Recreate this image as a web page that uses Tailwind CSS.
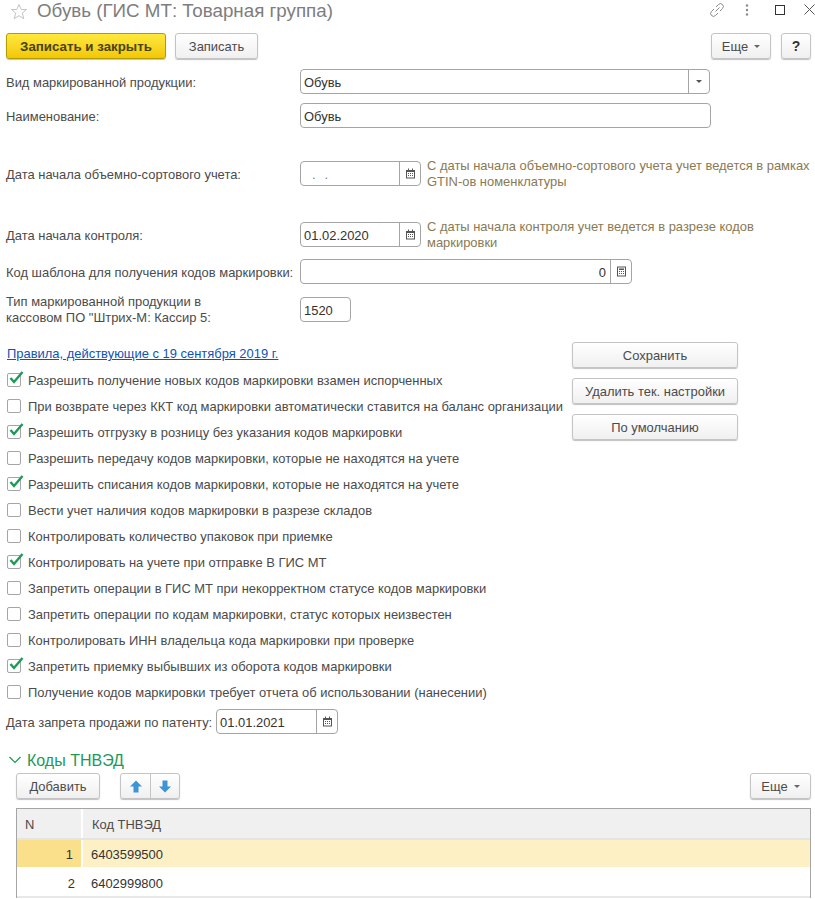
<!doctype html>
<html lang="ru">
<head>
  <meta charset="utf-8"/>
  <title>Обувь (ГИС МТ: Товарная группа)</title>
  <script src="https://cdn.jsdelivr.net/npm/@tailwindcss/browser@4"></script>
</head>
<body class="bg-white text-[#4b4b4b] font-['Liberation_Sans',Arial,sans-serif] text-[12.95px] leading-[15px]">
<div class="w-[815px] h-[899px] overflow-hidden">

  <!-- Заголовок -->
  <header class="h-[33px] flex items-start">
    <svg class="ml-[10px] mt-[3px] w-[18px] h-[18px]" viewBox="0 0 18 18" fill="none" stroke="#c4c4c4" stroke-width="1"><path d="M9 1.500l2.200 5h5.300l-4.200 3.600 1.500 5.600L9 12.700l-4.800 3 1.500-5.600L1.500 6.500h5.300z"/></svg>
    <h1 class="ml-[9px] mt-[-1px] text-[18.75px] leading-[24px] text-[#7d7d7d]">Обувь (ГИС МТ: Товарная группа)</h1>
    <div class="ml-auto flex items-start">
      <svg class="mt-[1px] w-[18px] h-[18px]" viewBox="0 0 18 18" fill="none" stroke="#8a8a8a" stroke-width="1"><path d="M7.500 10.500l4-4M6 8l-2.500 2.500a2.800 2.800 0 0 0 4 4L10 12M8 6l2.500-2.500a2.800 2.800 0 0 1 4 4L12 10"/></svg>
      <svg class="ml-[19px] mt-[3px] w-[4px] h-[14px]" viewBox="0 0 4 14" fill="#8a8a8a"><circle cx="2" cy="2.500" r="1.200"/><circle cx="2" cy="7" r="1.200"/><circle cx="2" cy="11.500" r="1.200"/></svg>
      <div class="ml-[26px] mt-[5px] w-[10px] h-[10px] border border-[#333]"></div>
      <svg class="ml-[19px] mt-[4px] w-[11px] h-[11px]" viewBox="0 0 11 11" stroke="#555" stroke-width="1"><path d="M0.500 0.500l10 10M10.500 0.500l-10 10"/></svg>
    </div>
  </header>

  <!-- Командная панель -->
  <div class="h-[26px] flex pl-[6px] pr-[4px]">
    <button class="w-[160px] h-[26px] rounded-[3px] border border-[#b39b00] bg-gradient-to-b from-[#ffe93a] to-[#f2c700] font-bold text-[13.3px] text-[#4a4312] shadow-[0_1px_1px_rgba(0,0,0,0.25)]">Записать и закрыть</button>
    <button class="ml-[9px] w-[83px] h-[26px] rounded-[3px] border border-[#c4c4c4] bg-gradient-to-b from-white to-[#f0f0f0] text-[#4b4b4b] shadow-[0_1px_1px_rgba(0,0,0,0.25)]">Записать</button>
    <button class="ml-auto w-[60px] h-[26px] rounded-[3px] border border-[#c4c4c4] bg-gradient-to-b from-white to-[#f0f0f0] shadow-[0_1px_1px_rgba(0,0,0,0.25)] flex items-center justify-center gap-[6px]">Еще<span class="w-0 h-0 border-x-[3px] border-x-transparent border-t-[3px] border-t-[#666]"></span></button>
    <button class="ml-[10px] w-[30px] h-[26px] rounded-[3px] border border-[#c4c4c4] bg-gradient-to-b from-white to-[#f0f0f0] font-bold text-[14px] text-[#333] shadow-[0_1px_1px_rgba(0,0,0,0.25)]">?</button>
  </div>

  <!-- Реквизиты -->
  <div class="pl-[6px] mt-[10px] flex h-[25px] items-center">
    <label class="w-[294px] pt-[2px]">Вид маркированной продукции:</label>
    <div class="w-[410px] h-[25px] rounded-[4px] border border-[#a5a5a5] flex items-center">
      <span class="flex-1 pl-[3px] pt-[2px] text-[#333]">Обувь</span>
      <span class="w-[21px] h-full border-l border-[#a5a5a5] flex items-center justify-center"><span class="w-0 h-0 border-x-[3px] border-x-transparent border-t-[3px] border-t-[#555]"></span></span>
    </div>
  </div>
  <div class="pl-[6px] mt-[9px] flex h-[25px] items-center">
    <label class="w-[294px] pt-[2px]">Наименование:</label>
    <div class="w-[411px] h-[25px] rounded-[4px] border border-[#a5a5a5] flex items-center pl-[3px] pt-[2px] text-[#333]">Обувь</div>
  </div>

  <div class="pl-[6px] mt-[33px] flex h-[25px] items-center">
    <label class="w-[294px] pt-[2px]">Дата начала объемно-сортового учета:</label>
    <div class="w-[121px] h-[25px] rounded-[4px] border border-[#a5a5a5] flex items-center">
      <span class="flex-1 pl-[11px] pt-[2px] text-[#777] tracking-[9px]">..</span>
      <span class="w-[21px] h-full border-l border-[#a5a5a5] flex items-center justify-center">
        <svg class="w-[11px] h-[11px]" viewBox="0 0 11 11"><path fill="#555" d="M1 2h2V0.500h1V2h3V0.500h1V2h2v8.500H1z"/><path fill="#fff" d="M2 4h7v5.500H2z"/><path fill="#555" d="M3 5h1v1H3zM5 5h1v1H5zM7 5h1v1H7zM3 7h1v1H3zM5 7h1v1H5zM7 7h1v1H7z"/></svg>
      </span>
    </div>
    <p class="ml-[6px] w-[388px] text-[#8a7a52] leading-[16px] pt-[1px]">С даты начала объемно-сортового учета учет ведется в рамках GTIN-ов номенклатуры</p>
  </div>

  <div class="pl-[6px] mt-[36px] flex h-[25px] items-center">
    <label class="w-[294px] pt-[2px]">Дата начала контроля:</label>
    <div class="w-[121px] h-[25px] rounded-[4px] border border-[#a5a5a5] flex items-center">
      <span class="flex-1 pl-[3px] pt-[2px] text-[#333]">01.02.2020</span>
      <span class="w-[21px] h-full border-l border-[#a5a5a5] flex items-center justify-center">
        <svg class="w-[11px] h-[11px]" viewBox="0 0 11 11"><path fill="#555" d="M1 2h2V0.500h1V2h3V0.500h1V2h2v8.500H1z"/><path fill="#fff" d="M2 4h7v5.500H2z"/><path fill="#555" d="M3 5h1v1H3zM5 5h1v1H5zM7 5h1v1H7zM3 7h1v1H3zM5 7h1v1H5zM7 7h1v1H7z"/></svg>
      </span>
    </div>
    <p class="ml-[6px] w-[360px] text-[#8a7a52] leading-[16px]">С даты начала контроля учет ведется в разрезе кодов маркировки</p>
  </div>

  <div class="pl-[6px] mt-[12px] flex h-[25px] items-center">
    <label class="w-[294px] pt-[2px]">Код шаблона для получения кодов маркировки:</label>
    <div class="w-[332px] h-[25px] rounded-[4px] border border-[#a5a5a5] flex items-center">
      <span class="flex-1 pr-[4px] pt-[2px] text-right text-[#333]">0</span>
      <span class="w-[21px] h-full border-l border-[#a5a5a5] flex items-center justify-center">
        <svg class="w-[11px] h-[11px]" viewBox="0 0 11 11"><path fill="#555" d="M1 0.500h9v10H1z"/><path fill="#fff" d="M2 1.500h7v8H2z"/><path fill="#555" d="M3 2.500h5v1.500H3zM3 5h1v1H3zM5 5h1v1H5zM7 5h1v1H7zM3 7h1v1H3zM5 7h1v1H5zM7 7h1v1H7z"/></svg>
      </span>
    </div>
  </div>

  <div class="pl-[6px] mt-[13px] flex h-[25px] items-center">
    <label class="w-[294px] leading-[16px]">Тип маркированной продукции в<br/>кассовом ПО "Штрих-М: Кассир 5:</label>
    <div class="w-[51px] h-[25px] rounded-[4px] border border-[#a5a5a5] flex items-center pl-[3px] pt-[2px] text-[#333]">1520</div>
  </div>

  <!-- Правила -->
  <section class="mt-[20px] flex">
    <div class="pl-[7px] w-[572px] shrink-0">
      <a class="block mt-[4px] h-[15px] text-[#0f54b5] underline" href="#">Правила, действующие с 19 сентября 2019 г.</a>
      <ul class="mt-[6px]">
        <li class="h-[26px] flex items-center gap-[7px]">
          <span class="relative w-[14px] h-[14px] rounded-[2px] border border-[#a5a5a5]"><svg class="absolute left-[1px] top-[-4px] w-[15px] h-[15px]" viewBox="0 0 15 15" fill="none" stroke="#1d9a58" stroke-width="2.400"><path d="M1.500 8l3.500 4L13.500 2"/></svg></span>
          Разрешить получение новых кодов маркировки взамен испорченных
        </li>
        <li class="h-[26px] flex items-center gap-[7px]">
          <span class="w-[14px] h-[14px] rounded-[2px] border border-[#a5a5a5]"></span>
          При возврате через ККТ код маркировки автоматически ставится на баланс организации
        </li>
        <li class="h-[26px] flex items-center gap-[7px]">
          <span class="relative w-[14px] h-[14px] rounded-[2px] border border-[#a5a5a5]"><svg class="absolute left-[1px] top-[-4px] w-[15px] h-[15px]" viewBox="0 0 15 15" fill="none" stroke="#1d9a58" stroke-width="2.400"><path d="M1.500 8l3.500 4L13.500 2"/></svg></span>
          Разрешить отгрузку в розницу без указания кодов маркировки
        </li>
        <li class="h-[26px] flex items-center gap-[7px]">
          <span class="w-[14px] h-[14px] rounded-[2px] border border-[#a5a5a5]"></span>
          Разрешить передачу кодов маркировки, которые не находятся на учете
        </li>
        <li class="h-[26px] flex items-center gap-[7px]">
          <span class="relative w-[14px] h-[14px] rounded-[2px] border border-[#a5a5a5]"><svg class="absolute left-[1px] top-[-4px] w-[15px] h-[15px]" viewBox="0 0 15 15" fill="none" stroke="#1d9a58" stroke-width="2.400"><path d="M1.500 8l3.500 4L13.500 2"/></svg></span>
          Разрешить списания кодов маркировки, которые не находятся на учете
        </li>
        <li class="h-[26px] flex items-center gap-[7px]">
          <span class="w-[14px] h-[14px] rounded-[2px] border border-[#a5a5a5]"></span>
          Вести учет наличия кодов маркировки в разрезе складов
        </li>
        <li class="h-[26px] flex items-center gap-[7px]">
          <span class="w-[14px] h-[14px] rounded-[2px] border border-[#a5a5a5]"></span>
          Контролировать количество упаковок при приемке
        </li>
        <li class="h-[26px] flex items-center gap-[7px]">
          <span class="relative w-[14px] h-[14px] rounded-[2px] border border-[#a5a5a5]"><svg class="absolute left-[1px] top-[-4px] w-[15px] h-[15px]" viewBox="0 0 15 15" fill="none" stroke="#1d9a58" stroke-width="2.400"><path d="M1.500 8l3.500 4L13.500 2"/></svg></span>
          Контролировать на учете при отправке В ГИС МТ
        </li>
        <li class="h-[26px] flex items-center gap-[7px]">
          <span class="w-[14px] h-[14px] rounded-[2px] border border-[#a5a5a5]"></span>
          Запретить операции в ГИС МТ при некорректном статусе кодов маркировки
        </li>
        <li class="h-[26px] flex items-center gap-[7px]">
          <span class="w-[14px] h-[14px] rounded-[2px] border border-[#a5a5a5]"></span>
          Запретить операции по кодам маркировки, статус которых неизвестен
        </li>
        <li class="h-[26px] flex items-center gap-[7px]">
          <span class="w-[14px] h-[14px] rounded-[2px] border border-[#a5a5a5]"></span>
          Контролировать ИНН владельца кода маркировки при проверке
        </li>
        <li class="h-[26px] flex items-center gap-[7px]">
          <span class="relative w-[14px] h-[14px] rounded-[2px] border border-[#a5a5a5]"><svg class="absolute left-[1px] top-[-4px] w-[15px] h-[15px]" viewBox="0 0 15 15" fill="none" stroke="#1d9a58" stroke-width="2.400"><path d="M1.500 8l3.500 4L13.500 2"/></svg></span>
          Запретить приемку выбывших из оборота кодов маркировки
        </li>
        <li class="h-[26px] flex items-center gap-[7px]">
          <span class="w-[14px] h-[14px] rounded-[2px] border border-[#a5a5a5]"></span>
          Получение кодов маркировки требует отчета об использовании (нанесении)
        </li>
      </ul>
    </div>
    <div class="w-[166px] flex flex-col gap-[10px]">
      <button class="h-[26px] rounded-[3px] border border-[#c4c4c4] bg-gradient-to-b from-white to-[#f0f0f0] shadow-[0_1px_1px_rgba(0,0,0,0.25)]">Сохранить</button>
      <button class="h-[26px] rounded-[3px] border border-[#c4c4c4] bg-gradient-to-b from-white to-[#f0f0f0] shadow-[0_1px_1px_rgba(0,0,0,0.25)]">Удалить тек. настройки</button>
      <button class="h-[26px] rounded-[3px] border border-[#c4c4c4] bg-gradient-to-b from-white to-[#f0f0f0] shadow-[0_1px_1px_rgba(0,0,0,0.25)]">По умолчанию</button>
    </div>
  </section>

  <div class="pl-[6px] mt-[4px] flex h-[25px] items-center">
    <label class="w-[210px] pt-[2px]">Дата запрета продажи по патенту:</label>
    <div class="w-[122px] h-[25px] rounded-[4px] border border-[#a5a5a5] flex items-center">
      <span class="flex-1 pl-[3px] pt-[2px] text-[#333]">01.01.2021</span>
      <span class="w-[21px] h-full border-l border-[#a5a5a5] flex items-center justify-center">
        <svg class="w-[11px] h-[11px]" viewBox="0 0 11 11"><path fill="#555" d="M1 2h2V0.500h1V2h3V0.500h1V2h2v8.500H1z"/><path fill="#fff" d="M2 4h7v5.500H2z"/><path fill="#555" d="M3 5h1v1H3zM5 5h1v1H5zM7 5h1v1H7zM3 7h1v1H3zM5 7h1v1H5zM7 7h1v1H7z"/></svg>
      </span>
    </div>
  </div>

  <!-- Коды ТНВЭД -->
  <div class="mt-[16px] h-[20px] flex items-center pl-[9px]">
    <svg class="w-[12px] h-[8px]" viewBox="0 0 12 8" fill="none" stroke="#1d9a58" stroke-width="1.200"><path d="M0.500 1l5.500 5.500L11.500 1"/></svg>
    <span class="ml-[6px] text-[16px] text-[#1d9a58]">Коды ТНВЭД</span>
  </div>
  <div class="mt-[3px] flex pl-[16px] pr-[4px] h-[26px]">
    <button class="w-[84px] h-[26px] rounded-[3px] border border-[#c4c4c4] bg-gradient-to-b from-white to-[#f0f0f0] shadow-[0_1px_1px_rgba(0,0,0,0.25)]">Добавить</button>
    <div class="ml-[20px] w-[60px] h-[26px] rounded-[3px] border border-[#c4c4c4] bg-gradient-to-b from-white to-[#f0f0f0] shadow-[0_1px_1px_rgba(0,0,0,0.25)] flex">
      <span class="w-[30px] border-r border-[#c4c4c4] flex items-center justify-center"><svg class="w-[12px] h-[13px]" viewBox="0 0 12 13" fill="#3d94d6"><path d="M6 0.500L12 6.500H8.500V12.500H3.500V6.500H0z"/></svg></span>
      <span class="flex-1 flex items-center justify-center"><svg class="w-[12px] h-[13px]" viewBox="0 0 12 13" fill="#3d94d6"><path d="M6 12.500L12 6.500H8.500V0.500H3.500V6.500H0z"/></svg></span>
    </div>
    <button class="ml-auto w-[61px] h-[26px] rounded-[3px] border border-[#c4c4c4] bg-gradient-to-b from-white to-[#f0f0f0] shadow-[0_1px_1px_rgba(0,0,0,0.25)] flex items-center justify-center gap-[6px]">Еще<span class="w-0 h-0 border-x-[3px] border-x-transparent border-t-[3px] border-t-[#666]"></span></button>
  </div>

  <div class="mt-[9px] ml-[16px] w-[795px] border-x border-t border-[#a5a5a5]">
    <div class="flex h-[31px] bg-[#f0f0f0] border-b-2 border-[#e4e4e4] items-center">
      <span class="w-[66px] pl-[8px] pt-[2px] h-full flex items-center border-r-2 border-white">N</span>
      <span class="pl-[9px] pt-[2px]">Код ТНВЭД</span>
    </div>
    <div class="flex h-[29px] bg-[#fdf0c5] border-b-2 border-white items-center text-[#333]">
      <span class="w-[66px] h-full pr-[8px] pt-[2px] flex items-center justify-end bg-[#fbe08c] border-r-2 border-white">1</span>
      <span class="pl-[8px] pt-[2px]">6403599500</span>
    </div>
    <div class="flex h-[29px] border-b-2 border-[#e8e8e8] items-center text-[#333]">
      <span class="w-[66px] pr-[8px] pt-[2px] text-right">2</span>
      <span class="pl-[8px] pt-[2px]">6402999800</span>
    </div>
  </div>
</div>
</body>
</html>
